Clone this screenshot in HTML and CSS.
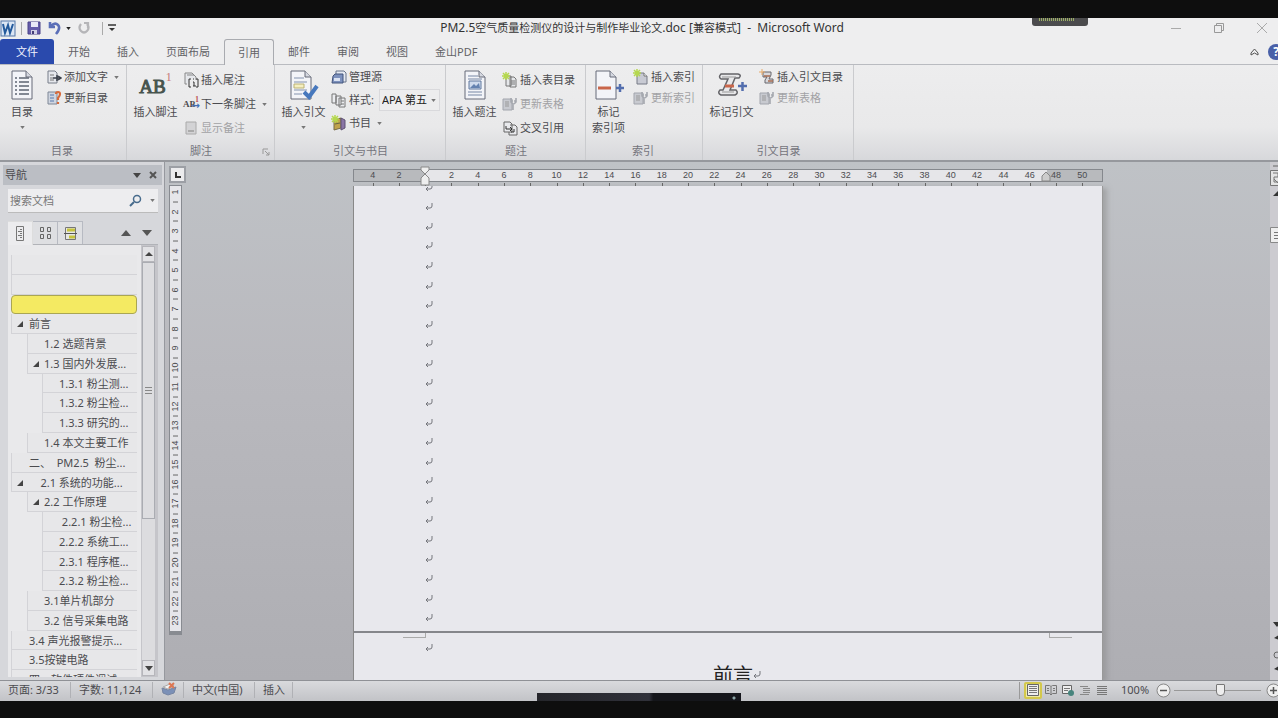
FILE: index.html
```html
<!DOCTYPE html>
<html lang="zh-CN">
<head>
<meta charset="utf-8">
<title>PM2.5空气质量检测仪的设计与制作毕业论文.doc</title>
<link rel="stylesheet" href="styles.css">
</head>
<body>
<svg class="defs" aria-hidden="true">
  <symbol id="page" viewBox="0 0 24 30"><path d="M2 1h14l6 6v22H2z" fill="#f3f4f8" stroke="#666b78"/><path d="M16 1v6h6" fill="#d5d8e0" stroke="#666b78"/></symbol>
  <symbol id="caret" viewBox="0 0 6 4"><path d="M0 0h6L3 4z" fill="currentColor"/></symbol>
  <symbol id="spark" viewBox="0 0 8 8"><path d="M4 0v8M0 4h8M1 1l6 6M7 1l-6 6" stroke="#b5d84e" stroke-width="1.5"/></symbol>
  <symbol id="update" viewBox="0 0 16 16"><path d="M1 3h9v11H1z" fill="#c8cad0" stroke="#a2a5ad"/><path d="M3 6h4M3 8h4M3 10h4" stroke="#999"/><path d="M9 2v4l2 2v6M14 2v4l-2 2M9 5h2M12 5h2" fill="none" stroke="#a5a8af" stroke-width="1.6"/></symbol>
  <symbol id="return" viewBox="0 0 8 8"><path d="M7 0v3q0 2-2 2H1M3 3L1 5l2 2" fill="none" stroke="#75767c"/></symbol>
</svg>
<div class="screen">
  <header class="titlebar">
    <div class="quick">
      <svg width="17" height="17" viewBox="0 0 17 17"><rect x="1" y="1" width="14" height="15" fill="#dce6f4" stroke="#5577a8"/><path d="M3 4l2 9 3-8 2 8 3-9" fill="none" stroke="#245a9c" stroke-width="2"/></svg>
      <i class="bar"></i>
      <button aria-label="保存"><svg width="14" height="14" viewBox="0 0 14 14"><path d="M1 1h12v12H1z" fill="#655caa" stroke="#4b4388"/><path d="M4 1h7v5H4z" fill="#e9e9f7"/><path d="M4 9h6v4H4z" fill="#d0cfe5"/><path d="M5 10h2v3H5z" fill="#443d78"/></svg></button>
      <button class="undo" aria-label="撤消"><svg width="13" height="14" viewBox="0 0 13 14"><path d="M2 1v5h5M3 5q4-4 7-1t-2 9" fill="none" stroke="#5b6fb8" stroke-width="2.6"/></svg><svg class="caret dark"><use href="#caret"/></svg></button>
      <button aria-label="重复"><svg width="13" height="14" viewBox="0 0 13 14"><path d="M3 3q-3 4 0 7t6 0 0-7M10 7V2H6" fill="none" stroke="#b5b5b8" stroke-width="2.2"/></svg></button>
      <i class="bar"></i>
      <button aria-label="自定义快速访问工具栏"><svg width="8" height="8" viewBox="0 0 8 8"><path d="M0 1h8" stroke="#333" stroke-width="1.5"/><path d="M1 4h6L4 7z" fill="#333"/></svg></button>
    </div>
    <h1><span>PM2.5</span>空气质量检测仪的设计与制作毕业论文<span>.doc [</span>兼容模式<span>] &nbsp;- &nbsp;Microsoft Word</span></h1>
    <div class="winctl">
      <button aria-label="最小化"><svg width="12" height="12"><path d="M1 6.500h10" stroke="#aaa"/></svg></button>
      <button aria-label="还原"><svg width="12" height="12" fill="none" stroke="#999"><path d="M1.500 3.500h7v7h-7zM3.500 3V1.500h7v7H9"/></svg></button>
      <button aria-label="关闭"><svg width="12" height="12"><path d="M1 1l10 10M11 1L1 11" stroke="#aaa"/></svg></button>
    </div>
  </header>
  <nav class="tabs">
    <button class="file">文件</button><button>开始</button><button>插入</button><button>页面布局</button><button class="active">引用</button><button>邮件</button><button>审阅</button><button>视图</button><button>金山PDF</button>
    <div class="help"><button aria-label="折叠功能区"><svg width="9" height="8" viewBox="0 0 9 8"><path d="M1 5l3.500-4L8 5v2L4.500 5 1 7z" fill="none" stroke="#555"/></svg></button><button class="q" aria-label="帮助">?</button></div>
  </nav>
  <section class="ribbon">
    <div class="group g1">
      <div class="body">
        <button class="big"><svg width="24" height="30"><use href="#page"/><path d="M5 8h2M9 8h10M5 12h2M9 12h10M5 16h2M9 16h10M5 20h2M9 20h10M5 24h2M9 24h10" stroke="#5d6472" stroke-width="1.500"/></svg><span>目录</span><svg class="caret"><use href="#caret"/></svg></button>
        <div class="col">
          <button><svg class="ic" viewBox="0 0 16 16"><path d="M2 2h7l2 2v10H2z" fill="#e5e7ec" stroke="#777d88"/><path d="M4 6h4M4 9h3M4 11h4" stroke="#777"/><path d="M7 9h7M11 6v6M12 7l3 2-3 2" stroke="#3a3f49" stroke-width="1.500" fill="none"/></svg>添加文字<svg class="caret"><use href="#caret"/></svg></button>
          <button><svg class="ic" viewBox="0 0 16 16"><path d="M2 2h9v12H2z" fill="#cfd5e0" stroke="#7f8796"/><path d="M4 5h4M4 8h4M4 11h4" stroke="#5878ad"/><path d="M10 4q0-2 2-2t2 2-2 4v2M12 12v2" fill="none" stroke="#d66a3c" stroke-width="2.200"/></svg>更新目录</button>
        </div>
      </div>
      <h2>目录</h2>
    </div>
    <div class="group g2">
      <div class="body">
        <button class="big"><b class="ab">AB<sup>1</sup></b><span>插入脚注</span></button>
        <div class="col three">
          <button><svg class="ic" viewBox="0 0 16 16"><path d="M4 12H2V1h7l2 2M4 3h7l2 2v3" fill="#e6e8ec" stroke="#888"/><path d="M8 7H6v8h2M13 7h2v8h-2M10 10h1v4M10 14h3M10 7h1" fill="none" stroke="#333"/></svg>插入尾注</button>
          <button><b class="mini">AB<sup>1</sup></b>下一条脚注<svg class="caret"><use href="#caret"/></svg></button>
          <button disabled><svg class="ic" viewBox="0 0 16 16"><path d="M3 2h10v12H3z" fill="#d3d3d5" stroke="#aaa"/><path d="M5 10h6v2H5z" fill="#aaa"/></svg>显示备注</button>
        </div>
      </div>
      <h2>脚注</h2><button class="launcher" aria-label="脚注和尾注"><svg width="8" height="8"><path d="M1 6V1h5M3 3l4 4M7 4v3H4" fill="none" stroke="#999"/></svg></button>
    </div>
    <div class="group g3">
      <div class="body">
        <button class="big"><svg width="32" height="30"><use href="#page" x="1" width="24" height="30"/><path d="M6 8h10M6 12h13M6 20h13M6 24h8" stroke="#8493ae"/><path d="M6 14h10v4H6z" fill="#f5efc0" stroke="#bbb174"/><path d="M16 22l5 5 8-11" fill="none" stroke="#4778bd" stroke-width="4"/></svg><span>插入引文</span><svg class="caret"><use href="#caret"/></svg></button>
        <div class="col mid">
          <button><svg class="ic" viewBox="0 0 16 16"><path d="M5 6V2h8l2 2v9H9" fill="#e5e9f1" stroke="#69758b"/><path d="M2 7l2-2h8v9H1z" fill="#7d91bd" stroke="#43547c"/><path d="M3 9h6v3H3z" fill="#dbe3f3"/></svg>管理源</button>
          <div class="row"><svg class="ic" viewBox="0 0 16 16"><path d="M1 2h4v9H1zM5 4h5v9H5zM8 6h6v9H8z" fill="#ebecef" stroke="#777"/><path d="M10 9h3M10 12h3" stroke="#777"/></svg><label for="style">样式:</label><span class="pick"><select id="style"><option>APA 第五</option></select><svg class="caret"><use href="#caret"/></svg></span></div>
          <button><svg class="ic" viewBox="0 0 16 16"><path d="M3 5l7-2v10l-7 2z" fill="#c0a34c" stroke="#776b44"/><path d="M10 3l4 2v8l-4 2z" fill="#8a75a5" stroke="#5f5372"/><path d="M4 9l5-1" stroke="#664"/><use href="#spark" width="8" height="8"/></svg>书目<svg class="caret"><use href="#caret"/></svg></button>
        </div>
      </div>
      <h2>引文与书目</h2>
    </div>
    <div class="group g4">
      <div class="body">
        <button class="big"><svg width="24" height="30"><use href="#page"/><path d="M5 6h10M5 9h14M5 22h14M5 25h14" stroke="#7787a5"/><path d="M6 11h12v8H6z" fill="#cfdbed" stroke="#61789e"/><path d="M7 18l4-4 2 2 3-3 1 5z" fill="#6482b0"/></svg><span>插入题注</span></button>
        <div class="col three">
          <button><svg class="ic" viewBox="0 0 16 16"><path d="M4 4h5v10H4zM8 5h4l2 2v8H8z" fill="#e5e7ea" stroke="#777"/><path d="M10 8v5M12 8v5" stroke="#777"/><use href="#spark" width="8" height="8"/></svg>插入表目录</button>
          <button disabled><svg class="ic"><use href="#update"/></svg>更新表格</button>
          <button><svg class="ic" viewBox="0 0 16 16"><path d="M2 2h6l2 2v8H2zM8 5h5l2 2v8H7v-3" fill="#e9eaed" stroke="#666"/><path d="M4 6v3h5M8 7l2 2-2 2M12 9v3h-3" fill="none" stroke="#333"/></svg>交叉引用</button>
        </div>
      </div>
      <h2>题注</h2>
    </div>
    <div class="group g5">
      <div class="body">
        <button class="big"><svg width="32" height="30"><use href="#page" x="1" width="24" height="30"/><path d="M5 18h13" stroke="#c9664b" stroke-width="3"/><path d="M23 18h8M27 14v8" stroke="#536eae" stroke-width="2.500"/></svg><span>标记<br>索引项</span></button>
        <div class="col">
          <button><svg class="ic" viewBox="0 0 16 16"><path d="M4 4h7l3 3v8H4z" fill="#c8cad3" stroke="#777b86"/><path d="M11 4v3h3" fill="#fff" stroke="#777"/><use href="#spark" width="8" height="8"/></svg>插入索引</button>
          <button disabled><svg class="ic"><use href="#update"/></svg>更新索引</button>
        </div>
      </div>
      <h2>索引</h2>
    </div>
    <div class="group g6">
      <div class="body">
        <button class="big"><svg width="32" height="30"><path d="M5 4h17q4 1 1 4h-4l-5 12h6q3 3-1 5H5q-4-2-1-5h3l5-11H5q-3-2 0-5z" fill="#e8e8ea" stroke="#646468" stroke-width="1.500"/><path d="M6 7h14M6 22h12" stroke="#999"/><path d="M9 16h9" stroke="#c9664b" stroke-width="3"/><path d="M22 16h9M26.500 12v9" stroke="#536eae" stroke-width="2.500"/></svg><span>标记引文</span></button>
        <div class="col">
          <button><svg class="ic" viewBox="0 0 16 16"><path d="M4 3h8v3l-2 4h4v4H6v-3l2-3H4z" fill="#d8d8dc" stroke="#66666c"/><path d="M5 7h6M9 12h5" stroke="#a66b4f" stroke-width="1.500"/><path d="M3 0v6M0 3h6" stroke="#e7aa68"/></svg>插入引文目录</button>
          <button disabled><svg class="ic"><use href="#update"/></svg>更新表格</button>
        </div>
      </div>
      <h2>引文目录</h2>
    </div>
  </section>
  <main class="work">
    <aside class="nav">
      <header><h2>导航</h2><button aria-label="选项"><svg width="8" height="5"><path d="M0 0h8L4 5z" fill="#444"/></svg></button><button aria-label="关闭"><svg width="8" height="8"><path d="M1 1l6 6M7 1L1 7" stroke="#555" stroke-width="2"/></svg></button></header>
      <div class="search"><input aria-label="搜索文档" placeholder="搜索文档"><button aria-label="搜索"><svg width="13" height="13"><circle cx="8" cy="5" r="3.500" fill="none" stroke="#476b8c" stroke-width="1.500"/><path d="M5 8l-4 4" stroke="#476b8c" stroke-width="2"/></svg></button><svg class="caret"><use href="#caret"/></svg></div>
      <div class="views">
        <button class="on" aria-label="标题"><svg width="10" height="15" fill="none" stroke="#777"><path d="M1.500.5h7v14h-7zM5 3.500h2M3 5.500h4M5 7.500h2M3 9.500h4M5 11.500h2"/></svg></button>
        <button aria-label="页面"><svg width="13" height="14" fill="none" stroke="#666"><path d="M1.500 1.500h3v4h-3zM8.500 1.500h3v4h-3zM1.500 8.500h3v4h-3zM8.500 8.500h3v4h-3z"/></svg></button>
        <button aria-label="结果"><svg width="13" height="15"><path d="M1.500 1.500h10v12h-10z" fill="#e7e7e4" stroke="#777"/><path d="M3 4h8M5 11h6" stroke="#c6c43c" stroke-width="3"/><path d="M0 7.500h13" stroke="#555"/></svg></button>
        <span class="step"><button aria-label="上一个"><svg width="10" height="6"><path d="M0 6h10L5 0z" fill="#555"/></svg></button><button aria-label="下一个"><svg width="10" height="6"><path d="M0 0h10L5 6z" fill="#555"/></svg></button></span>
      </div>
      <div class="outline">
        <ul>
          <li></li><li></li><li class="hit"></li>
          <li class="open">前言</li>
          <li class="l1">1.2 选题背景</li>
          <li class="l1 open">1.3 国内外发展...</li>
          <li class="l2">1.3.1 粉尘测...</li>
          <li class="l2">1.3.2 粉尘检...</li>
          <li class="l2">1.3.3 研究的...</li>
          <li class="l1">1.4 本文主要工作</li>
          <li>二、&nbsp; PM2.5&nbsp; 粉尘...</li>
          <li class="open">&nbsp; &nbsp; 2.1 系统的功能...</li>
          <li class="l1 open">2.2 工作原理</li>
          <li class="l2">&nbsp;2.2.1 粉尘检...</li>
          <li class="l2">2.2.2 系统工...</li>
          <li class="l2">2.3.1 程序框...</li>
          <li class="l2">2.3.2 粉尘检...</li>
          <li class="l1">3.1单片机部分</li>
          <li class="l1">3.2 信号采集电路</li>
          <li>3.4 声光报警提示...</li>
          <li>3.5按键电路</li>
          <li>四、软件硬件调试</li>
        </ul>
        <div class="scroll"><button aria-label="向上"><svg width="8" height="4"><path d="M0 4h8L4 0z" fill="#444"/></svg></button><div class="thumb"><i></i></div><button aria-label="向下"><svg width="8" height="5"><path d="M0 0h8L4 5z" fill="#444"/></svg></button></div>
      </div>
    </aside>
    <div class="vcol">
      <button class="tabsel" aria-label="制表符"><svg width="6" height="6"><path d="M1 0v5h5" fill="none" stroke="#333" stroke-width="2"/></svg></button>
      <ol class="vruler"><li>1</li><li>2</li><li>3</li><li>4</li><li>5</li><li>6</li><li>7</li><li>8</li><li>9</li><li>10</li><li>11</li><li>12</li><li>13</li><li>14</li><li>15</li><li>16</li><li>17</li><li>18</li><li>19</li><li>20</li><li>21</li><li>22</li><li>23</li></ol>
    </div>
    <div class="canvas">
      <div class="sheet">
        <ol class="hruler"><li>4</li><li>2</li><li class="zero"><svg width="10" height="20" viewBox="0 0 10 20"><path d="M1 1h8v3L5 8 1 4zM5 8l4 4v7H1v-7z" fill="#eee" stroke="#888"/></svg></li><li>2</li><li>4</li><li>6</li><li>8</li><li>10</li><li>12</li><li>14</li><li>16</li><li>18</li><li>20</li><li>22</li><li>24</li><li>26</li><li>28</li><li>30</li><li>32</li><li>34</li><li>36</li><li>38</li><li>40</li><li>42</li><li>44</li><li>46</li><li class="end"><svg width="10" height="12" viewBox="0 0 10 12"><path d="M5 2l4 4v5H1V6z" fill="#ccc" stroke="#888"/></svg>48</li><li>50</li></ol>
        <div class="paper">
          <div class="first"><div class="marks">
            <svg><use href="#return"/></svg><svg><use href="#return"/></svg><svg><use href="#return"/></svg><svg><use href="#return"/></svg><svg><use href="#return"/></svg><svg><use href="#return"/></svg><svg><use href="#return"/></svg><svg><use href="#return"/></svg><svg><use href="#return"/></svg><svg><use href="#return"/></svg><svg><use href="#return"/></svg><svg><use href="#return"/></svg><svg><use href="#return"/></svg><svg><use href="#return"/></svg><svg><use href="#return"/></svg><svg><use href="#return"/></svg><svg><use href="#return"/></svg><svg><use href="#return"/></svg><svg><use href="#return"/></svg><svg><use href="#return"/></svg><svg><use href="#return"/></svg><svg><use href="#return"/></svg><svg><use href="#return"/></svg>
          </div></div>
          <div class="second">
            <div class="corners"><i></i><i></i></div>
            <svg class="ret"><use href="#return"/></svg>
            <h3>前言<svg><use href="#return"/></svg></h3>
          </div>
        </div>
      </div>
    </div>
    <div class="vscroll">
      <svg width="8" height="50" fill="none"><path d="M3 4h5" stroke="#666"/><path d="M.5 8.500h10v15H.5z" fill="#e4e4e4" stroke="#777"/><path d="M3 11h5v4H4v5h4M4 17l4 4" stroke="#777"/><path d="M3 34l5-5v5z" fill="#333"/></svg>
      <svg width="8" height="16" fill="none"><path d="M.5.5h10v15H.5z" fill="#eee" stroke="#888"/><path d="M4 5.500h4M4 8.500h4M4 11.500h4" stroke="#777"/></svg>
      <svg class="low" width="8" height="60"><path d="M3 2h8L7 7zM4 18l5-3v5zM4 49l5-3v5z" fill="#333"/><circle cx="7" cy="35" r="3" fill="none" stroke="#666"/></svg>
    </div>
  </main>
  <footer class="status">
    <span class="s1">页面: 3/33</span><span class="s2">字数: 11,124</span>
    <span class="s3"><svg width="16" height="14" viewBox="0 0 16 14"><path d="M1 6l6 2 8-3-2 6-6 2-5-2z" fill="#7b90b7" stroke="#7685a2"/><path d="M2 5l5 2 6-3-4-2z" fill="#f4f4f4" stroke="#aaa"/><path d="M8 1l5 5M13 1L8 6" stroke="#dd7753" stroke-width="2"/></svg></span>
    <span class="s4">中文(中国)</span><span class="s5">插入</span>
    <div class="right">
      <button class="sel" aria-label="页面视图"><svg width="12" height="12"><path d="M.5.5h11v11H.5z" fill="#eee" stroke="#666"/><path d="M2 2.500h8M2 4.500h8M2 6.500h8M2 8.500h8" stroke="#777"/></svg></button>
      <button aria-label="阅读版式"><svg width="12" height="12" fill="none" stroke="#777"><path d="M.5 1.500h4l1.500 1 1.500-1h4v8h-4L6 11l-1.500-1.500h-4zM6 3v8M2 4.500h2M2 6.500h2M8 4.500h2M8 6.500h2"/></svg></button>
      <button aria-label="Web 版式"><svg width="12" height="12"><path d="M.5 1.500h9v8h-9z" fill="#eee" stroke="#666"/><path d="M2 4.500h6M2 6.500h4" stroke="#777"/><circle cx="9" cy="9" r="3" fill="#47847d"/></svg></button>
      <button aria-label="大纲视图"><svg width="12" height="12"><path d="M1 2.500h8M4 4.500h7M4 6.500h7M4 8.500h7M1 10.500h9" stroke="#888"/></svg></button>
      <button aria-label="草稿"><svg width="12" height="12"><path d="M1 2.500h10M1 4.500h10M1 6.500h10M1 8.500h10M1 10.500h10" stroke="#777"/></svg></button>
      <span class="pct">100%</span>
      <button class="round" aria-label="缩小"><svg width="15" height="15"><circle cx="7.500" cy="7.500" r="6.500" fill="#eee" stroke="#888"/><path d="M4 7.500h7" stroke="#555" stroke-width="1.500"/></svg></button>
      <input type="range" min="0" max="100" value="54" aria-label="显示比例">
      <button class="round" aria-label="放大"><svg width="15" height="15"><circle cx="7.500" cy="7.500" r="6.500" fill="#eee" stroke="#888"/><path d="M4 7.500h7M7.500 4v7" stroke="#555" stroke-width="1.500"/></svg></button>
    </div>
  </footer>
  <div class="recorder"></div>
  <div class="dock"></div>
</div>
</body>
</html>
```
FILE: styles.css
```css
* { box-sizing: border-box; }
body {
  margin: 0;
  background: #0e0e0e;
  color: #4b4b4f;
  font: 11px/16px "Noto Sans", "Noto Sans CJK SC", sans-serif;
}
h1, h2, h3, ul, ol { margin: 0; padding: 0; font: inherit; list-style: none; }
button {
  border: 0; padding: 0; background: none; color: inherit; font: inherit;
  display: flex; align-items: center; justify-content: center; white-space: nowrap;
}
button:disabled { color: #a2a2a5; }
svg { flex: none; }
.defs { position: absolute; width: 0; height: 0; }
.screen {
  position: relative; display: flex; flex-direction: column;
  height: 100vh; padding: 18px 0 17px; overflow: hidden;
}
.caret { width: 5px; height: 3px; color: #777; }
.dark { color: #222; }

.titlebar {
  display: grid; grid-template-columns: 1fr auto 1fr; align-items: center;
  height: 20px; flex: none; background: #eeeeef;
}
.titlebar h1 { color: #333; padding-left: 6px; white-space: nowrap; }
.titlebar h1 span { font-size: 12px; }
.quick { display: flex; align-items: center; }
.quick .bar { width: 1px; height: 13px; background: #aaa; margin: 0 5px 0 4px; }
.quick button { margin-right: 7px; }
.quick .undo { gap: 5px; }
.winctl { display: flex; justify-content: flex-end; gap: 31px; padding-right: 10px; }

.tabs {
  display: flex; align-items: stretch; gap: 1px; height: 27px; flex: none;
  padding-top: 1px; background: #eeeeef; border-bottom: 1px solid #b9bbc0; color: #626266;
}
.tabs > button { padding: 0 13px; border-radius: 3px 3px 0 0; }
.tabs > .file { width: 54px; background: #2a4aad; color: #f0f3ff; }
.tabs > .active { border: 1px solid #a9abb0; border-bottom: 0; background: #ededee; margin-bottom: -1px; }
.help { display: flex; margin-left: auto; gap: 9px; overflow: hidden; width: 28px; }
.q { width: 16px; height: 16px; align-self: center; border-radius: 50%; background: #4960a8; color: #fff; font-size: 12px; font-weight: bold; flex: none; }

.ribbon {
  display: flex; height: 97px; flex: none; border-bottom: 2px solid #96989d;
  background: linear-gradient(#ededee 0, #e9e9ea 65%, #d7d8db 100%);
}
.group { position: relative; display: flex; flex-direction: column; flex: none; border-right: 1px solid #cacbce; padding-left: 6px; }
.g1 { width: 127px; padding-left: 2px; }
.g2 { width: 148px; padding-left: 5px; }
.g3 { width: 171px; padding-left: 5px; }
.g4 { width: 140px; padding-left: 5px; }
.g5 { width: 117px; padding-left: 2px; }
.g6 { width: 151px; padding-left: 5px; }
.group h2 { text-align: center; color: #74747c; margin-left: -4px; }
.body { display: flex; gap: 4px; height: 78px; padding-top: 4px; }
.big { flex-direction: column; justify-content: flex-start; width: 47px; }
.big > svg:first-child { margin: 1px 0 4px; }
.big .caret { margin-top: 6px; }
.g1 .big { width: 40px; }
.g5 .big { width: 41px; }
.ab { position: relative; height: 32px; margin: 0 6px 3px 0; padding-top: 6px; font: 19px/24px "Liberation Serif", serif; color: #47544e; -webkit-text-stroke: 1px #47544e; }
.ab sup { position: absolute; top: 0; left: 100%; font-size: 12px; line-height: 16px; color: #c67878; -webkit-text-stroke: 0; }
.mini { position: relative; width: 16px; font: bold 9px/16px "Liberation Serif", serif; text-align: left; }
.mini sup { position: absolute; top: -4px; right: 0; font-size: 8px; color: #b55; }
.mini::after { content: "→"; position: absolute; right: -1px; top: 4px; font: bold 10px/12px "DejaVu Sans", sans-serif; color: #426db3; }
.ic { width: 16px; height: 16px; }
.col { display: flex; flex-direction: column; align-items: flex-start; gap: 5px; }
.col > button, .row { display: flex; align-items: center; gap: 3px; height: 16px; }
.col > button { gap: 2px; }
.col .caret { margin-left: 4px; }
.col.three { gap: 8px; padding-top: 3px; }
.col.mid { gap: 7px; }
.row { gap: 2px; }
.pick { position: relative; display: flex; align-items: center; margin-left: 3px; }
.pick select { appearance: none; width: 61px; height: 22px; border: 1px solid #d9d9dc; background: #ededee; padding: 0 2px; font: inherit; color: #222; }
.pick .caret { position: absolute; right: 4px; }
.launcher { position: absolute; right: 4px; bottom: 4px; }

.work { display: flex; flex: 1; min-height: 0; background: linear-gradient(#bfc2c6, #b9b9be 40%, #aeaeb3); }
.nav { display: flex; flex-direction: column; width: 165px; flex: none; padding: 3px 6px 3px 3px; background: #d6d7db; border-right: 1px solid #96989e; }
.nav header { display: flex; align-items: center; gap: 8px; height: 20px; margin-right: -4px; padding: 0 5px 0 2px; background: #bbbec4; flex: none; }
.nav h2 { flex: 1; }
.search { display: flex; align-items: center; gap: 8px; height: 24px; flex: none; margin: 4px 0 8px 5px; padding: 0 3px 0 2px; background: #ededef; border-bottom: 1px solid #bbb; }
.search input { flex: 1; min-width: 0; border: 0; padding: 0; background: none; font: inherit; outline: 0; }
.search input::placeholder { color: #777; opacity: 1; }
.views { display: flex; height: 24px; flex: none; margin-left: 5px; border-bottom: 1px solid #b1b3b8; }
.views > button { width: 25px; border: 1px solid #b7bac2; border-width: 1px 1px 0 0; background: #dedfe2; }
.views .on { background: #ececee; margin-bottom: -1px; border-color: #ddd; }
.step { display: flex; gap: 11px; margin-left: auto; padding-right: 6px; }
.outline { display: flex; flex: 1; min-height: 0; margin-left: 5px; background: #e9e9eb; overflow: hidden; justify-content: space-between; }
.outline ul { display: grid; grid-template-rows: repeat(22, 1fr); height: 435px; margin: 10px 0 0 3px; width: 126px; flex: none; }
.outline li { position: relative; min-height: 0; border: 1px solid #d3d3d7; border-width: 0 0 1px 1px; padding-left: 17px; white-space: nowrap; line-height: 19px; background: #e7e7e9; }
.outline .hit { border: 1px solid #aaa652; border-radius: 4px; background: #f4ea62; }
.outline .l1 { margin-left: 16px; padding-left: 16px; }
.outline .l2 { margin-left: 31px; padding-left: 16px; }
.open::before { content: ""; position: absolute; left: 5px; top: 7px; border: 3px solid; border-color: transparent #444 #444 transparent; }
.scroll { display: flex; flex-direction: column; width: 17px; flex: none; background: #dcdcdf; border: 1px solid #c5c5ca; border-right-width: 3px; }
.scroll button { height: 16px; flex: none; border: 1px solid #b6b6bb; background: #e2e2e5; }
.thumb { height: 257px; margin-bottom: auto; border: 1px solid #aaacb2; background: #dddde0; display: flex; align-items: center; justify-content: center; }
.thumb i { width: 7px; height: 7px; background: repeating-linear-gradient(#888 0 1px, transparent 1px 3px); }

.vcol { width: 22px; flex: none; padding: 4px 0 0 4px; }
.tabsel { width: 17px; height: 17px; border: 2px solid #9c9fa5; background: #ececee; margin-bottom: 2px; }
.vruler { display: flex; flex-direction: column; width: 13px; height: 450px; overflow: hidden; border: 1px solid #888b91; border-bottom-width: 4px; background: #e6e6ea; }
.vruler li { flex: 1; display: flex; align-items: center; justify-content: center; writing-mode: vertical-rl; transform: rotate(180deg); font: 9px/11px "Liberation Sans", sans-serif; background: linear-gradient(#666, #666) center bottom / 1px 4px no-repeat; background-size: 5px 1px; }
.vruler li:first-child { margin-top: -4px; }
.canvas { flex: 1; min-width: 0; display: flex; justify-content: center; padding-right: 2px; }
.sheet { display: flex; flex-direction: column; width: 750px; padding-top: 7px; }
.hruler { display: flex; height: 13px; flex: none; padding: 0 6px; border: 1px solid #85888d; margin-bottom: 4px; background: linear-gradient(90deg, #b8babd 9.6%, #e6e6e9 9.6% 92.7%, #b8babd 92.7%); font: 9px/11px "Liberation Sans", sans-serif; }
.hruler li { position: relative; flex: 1; text-align: center; }
.hruler li::after { content: ""; position: absolute; left: 50%; top: 13px; width: 1px; height: 3px; background: #666; }
.zero svg { position: absolute; left: 8px; top: -4px; z-index: 1; }
.end svg { position: absolute; left: -2px; top: 0; }
.paper { flex: 1; min-height: 0; display: flex; flex-direction: column; overflow: hidden; background: #e8e8ed; border-right: 1px solid #999; border-left: 1px solid #888; box-shadow: 4px 2px 5px #8888; }
.first { height: 447px; flex: none; border-bottom: 2px solid #85868b; overflow: hidden; }
.marks { display: grid; height: 450px; margin: -8px 0 0 71px; align-items: center; }
.marks svg, .ret, .second h3 svg { width: 8px; height: 8px; display: block; }
.second { padding: 0 30px 0 49px; }
.corners { display: flex; justify-content: space-between; }
.corners i { width: 23px; height: 5px; border: 1px solid #aaa; border-width: 0 1px 1px 0; }
.corners i:last-child { border-width: 0 0 1px 1px; }
.ret { margin: 6px 0 0 22px; }
.second h3 { display: flex; justify-content: center; align-items: center; margin-top: 9px; color: #222; font: 20px/28px "Noto Sans CJK SC", sans-serif; }
.vscroll { display: flex; flex-direction: column; width: 8px; flex: none; gap: 15px; background: #cccbd0; }
.vscroll .low { margin-top: auto; }

.status { display: flex; align-items: center; height: 21px; flex: none; border-top: 1px solid #8f9196; background: linear-gradient(#d9dadd, #c2c3c7); padding: 0 0 2px 8px; }
.status > span { border-right: 1px solid #b0b1b5; height: 16px; white-space: nowrap; }
.s1 { width: 63px; }
.s2 { width: 82px; padding-left: 8px; }
.s3 { width: 31px; padding-left: 8px; }
.s4 { width: 71px; padding-left: 8px; }
.s5 { width: 38px; padding-left: 8px; }
.right { display: flex; align-items: center; margin-left: auto; width: 259px; padding-left: 4px; border-left: 1px solid #999; overflow: hidden; }
.right button { width: 17px; height: 17px; flex: none; }
.right .sel { width: 18px; border: 2px solid #d3c84c; background: #eee9a8; border-radius: 2px; }
.pct { margin: 0 6px 0 11px; width: 30px; }
.right .round { width: 16px; }
.right input { appearance: none; width: 87px; height: 17px; flex: none; margin: 0 4px 0 3px; background: linear-gradient(#999, #999) center / 100% 1px no-repeat; }
.right input::-webkit-slider-thumb { appearance: none; width: 9px; height: 12px; border: 1px solid #777; border-radius: 1px 1px 4px 4px; background: #eee; }
.recorder { position: absolute; top: 10px; right: 190px; width: 56px; height: 16px; border-radius: 3px; border-top: 8px solid #0e0e0e; background: repeating-linear-gradient(90deg, #9cae65 0 1px, #4b4b4d 1px 2px) 7px 0 / 36px 3px no-repeat, #4b4b4d; }
.dock { position: absolute; bottom: 17px; left: 42%; width: 204px; height: 8px; background: radial-gradient(circle at 197px 5px, #8aa3a5 0 1px, transparent 2px), linear-gradient(90deg, #25262b, #30313a 55%, #15161b 57%); }
```
